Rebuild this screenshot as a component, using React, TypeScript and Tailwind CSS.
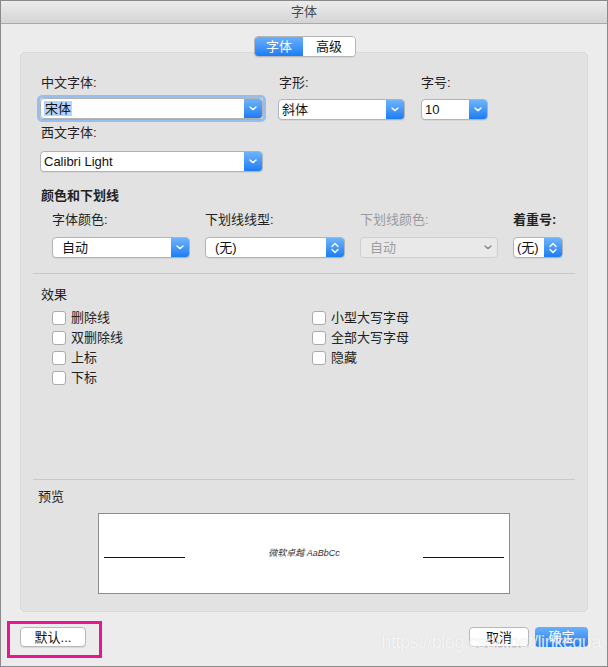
import React from 'react'

const font = { fontFamily: '"Liberation Sans", "Noto Sans CJK SC", sans-serif' }

function Chevron({ color = '#ffffff' }: { color?: string }) {
    return (
        <svg width="8" height="5" viewBox="0 0 8 5" fill="none">
            <path d="M1 1l3 2.6L7 1" stroke={color} strokeWidth="1.4" strokeLinecap="round" strokeLinejoin="round" />
        </svg>
    )
}

function UpDown() {
    return (
        <svg width="8" height="12" viewBox="0 0 8 12" fill="none">
            <path d="M1 4.5l3-3 3 3" stroke="#fff" strokeWidth="1.4" strokeLinecap="round" strokeLinejoin="round" />
            <path d="M1 7.5l3 3 3-3" stroke="#fff" strokeWidth="1.4" strokeLinecap="round" strokeLinejoin="round" />
        </svg>
    )
}

function Select({ text, className, updown, highlight }: { text: string; className: string; updown?: boolean; highlight?: boolean }) {
    return (
        <div className={`flex h-[21px] rounded-[4px] border border-[#b3b3b3] bg-white overflow-hidden shadow-[0_1px_0_rgba(0,0,0,0.05)] ${className}`}>
            <div className="flex-1 flex items-center pl-[3px] text-[13px] text-[#111] leading-none">
                <span className={highlight ? 'bg-[#b3d4fc] px-[1px] py-[1px]' : ''}>{text}</span>
            </div>
            <div className="w-[18px] flex items-center justify-center bg-gradient-to-b from-[#6cb3fa] to-[#1a7cf4]">
                {updown ? <UpDown /> : <Chevron />}
            </div>
        </div>
    )
}

function Check({ label }: { label: string }) {
    return (
        <div className="h-[20px] flex items-center gap-[5px]">
            <div className="w-[14px] h-[14px] rounded-[3px] border border-[#ababab] bg-white" />
            <span className="text-[13px] text-[#222]">{label}</span>
        </div>
    )
}

export default function App() {
    return (
        <div style={font} className="relative w-[608px] h-[667px] border border-[#8a8a8a] bg-[#ececec] bg-[radial-gradient(#e2e2e2_0.6px,transparent_0.6px)] bg-[length:4px_4px] flex flex-col overflow-hidden">
            {/* title bar */}
            <div className="h-[23px] shrink-0 flex items-center justify-center border-b border-[#a9a9a9] bg-gradient-to-b from-[#ececec] to-[#d4d4d4] text-[13px] text-[#4a4a4a]">
                字体
            </div>

            <div className="relative px-[19px] pt-[28px]">
                {/* segmented tabs */}
                <div className="absolute left-[253px] top-[12px] z-10 flex h-[21px] rounded-[4px] border border-[#b6b6b6] overflow-hidden text-[13px] shadow-[0_1px_0_rgba(0,0,0,0.06)]">
                    <div className="w-[48px] flex items-center justify-center bg-gradient-to-b from-[#6ab0fb] to-[#1a7cf5] text-white">字体</div>
                    <div className="w-[52px] flex items-center justify-center bg-white text-[#111]">高级</div>
                </div>

                {/* panel */}
                <div className="h-[560px] rounded-[5px] bg-[#e2e2e2] border border-[#dadada] pt-[22px] px-[12px]">
                    <div className="flex">
                        <div className="w-[245px] pl-[7px]">
                            <div className="pl-[1px] text-[13px] leading-[16px] text-[#222]">中文字体:</div>
                            <div className="mt-[4px] -ml-[3px] w-[229px] rounded-[5px] border-[3px] border-[#94bff0]">
                                <Select text="宋体" highlight className="w-[223px]" />
                            </div>
                            <div className="mt-[3px] pl-[1px] text-[13px] leading-[16px] text-[#222]">西文字体:</div>
                            <Select text="Calibri Light" className="mt-[10px] w-[223px]" />
                        </div>
                        <div className="w-[143px]">
                            <div className="pl-[1px] text-[13px] leading-[16px] text-[#222]">字形:</div>
                            <Select text="斜体" className="mt-[8px] w-[127px]" />
                        </div>
                        <div>
                            <div className="text-[13px] leading-[16px] text-[#222]">字号:</div>
                            <Select text="10" className="mt-[8px] w-[67px]" />
                        </div>
                    </div>

                    <div className="mt-[16px] pl-[8px] text-[13px] leading-[16px] font-bold text-[#222]">颜色和下划线</div>
                    <div className="mt-[8px] pl-[19px] flex">
                        <div className="w-[153px]">
                            <div className="text-[13px] leading-[16px] text-[#222]">字体颜色:</div>
                            <Select text="自动" className="mt-[9px] w-[138px] [&_span]:pl-[6px]" />
                        </div>
                        <div className="w-[155px]">
                            <div className="text-[13px] leading-[16px] text-[#222]">下划线线型:</div>
                            <Select text="(无)" updown className="mt-[9px] w-[140px] [&_span]:pl-[6px]" />
                        </div>
                        <div className="w-[153px]">
                            <div className="text-[13px] leading-[16px] text-[#9b9b9b]">下划线颜色:</div>
                            <div className="mt-[9px] w-[138px] h-[21px] rounded-[4px] border border-[#cfcfcf] bg-[#e9e9e9] flex items-center justify-between pl-[9px] pr-[5px] text-[13px] text-[#9e9e9e]">
                                <span>自动</span>
                                <Chevron color="#8a8a8a" />
                            </div>
                        </div>
                        <div>
                            <div className="font-semibold text-[13px] leading-[16px] text-[#222]">着重号:</div>
                            <Select text="(无)" updown className="mt-[9px] w-[50px]" />
                        </div>
                    </div>

                    <div className="mt-[15px] h-px bg-[#c9c9c9]" />

                    <div className="mt-[13px] pl-[8px] text-[13px] leading-[16px] text-[#222]">效果</div>
                    <div className="mt-[5px] pl-[19px] flex">
                        <div className="w-[260px]">
                            <Check label="删除线" />
                            <Check label="双删除线" />
                            <Check label="上标" />
                            <Check label="下标" />
                        </div>
                        <div>
                            <Check label="小型大写字母" />
                            <Check label="全部大写字母" />
                            <Check label="隐藏" />
                        </div>
                    </div>

                    <div className="mt-[91px] h-px bg-[#c9c9c9]" />

                    <div className="mt-[9px] pl-[5px] text-[13px] leading-[16px] text-[#222]">预览</div>
                    <div className="mt-[8px] ml-[65px] w-[412px] h-[81px] bg-white border border-[#8d8d8d] flex items-center px-[5px]">
                        <div className="w-[81px] h-[1px] bg-[#111] mt-[8px]" />
                        <div className="flex-1 text-center text-[9px] italic text-[#333]">微软卓越 AaBbCc</div>
                        <div className="w-[81px] h-[1px] bg-[#111] mt-[8px]" />
                    </div>
                </div>
            </div>

            {/* footer buttons */}
            <div className="flex items-center px-[19px] mt-[15px]">
                <button className="w-[66px] h-[20px] rounded-[4px] border border-[#b8b8b8] bg-white text-[13px] text-[#111] shadow-[0_1px_0_rgba(0,0,0,0.08)]">默认...</button>
                <div className="flex-1" />
                <button className="w-[60px] h-[20px] rounded-[4px] border border-[#b8b8b8] bg-white text-[13px] text-[#111] shadow-[0_1px_0_rgba(0,0,0,0.08)]">取消</button>
                <button className="ml-[6px] w-[53px] h-[20px] rounded-[4px] bg-gradient-to-b from-[#6ab0fb] to-[#1a7cf5] text-[13px] text-white">确定</button>
            </div>

            {/* annotation + watermark */}
            <div className="absolute left-[6px] top-[620px] w-[95px] h-[37px] border-[3px] border-[#ea1690]" />
            <div className="absolute right-[6px] top-[628px] text-[18px] text-white/80 tracking-tight pointer-events-none [text-shadow:0_0_1px_rgba(0,0,0,0.15)]">https://blog.csdn.net/linkequa</div>
        </div>
    )
}
